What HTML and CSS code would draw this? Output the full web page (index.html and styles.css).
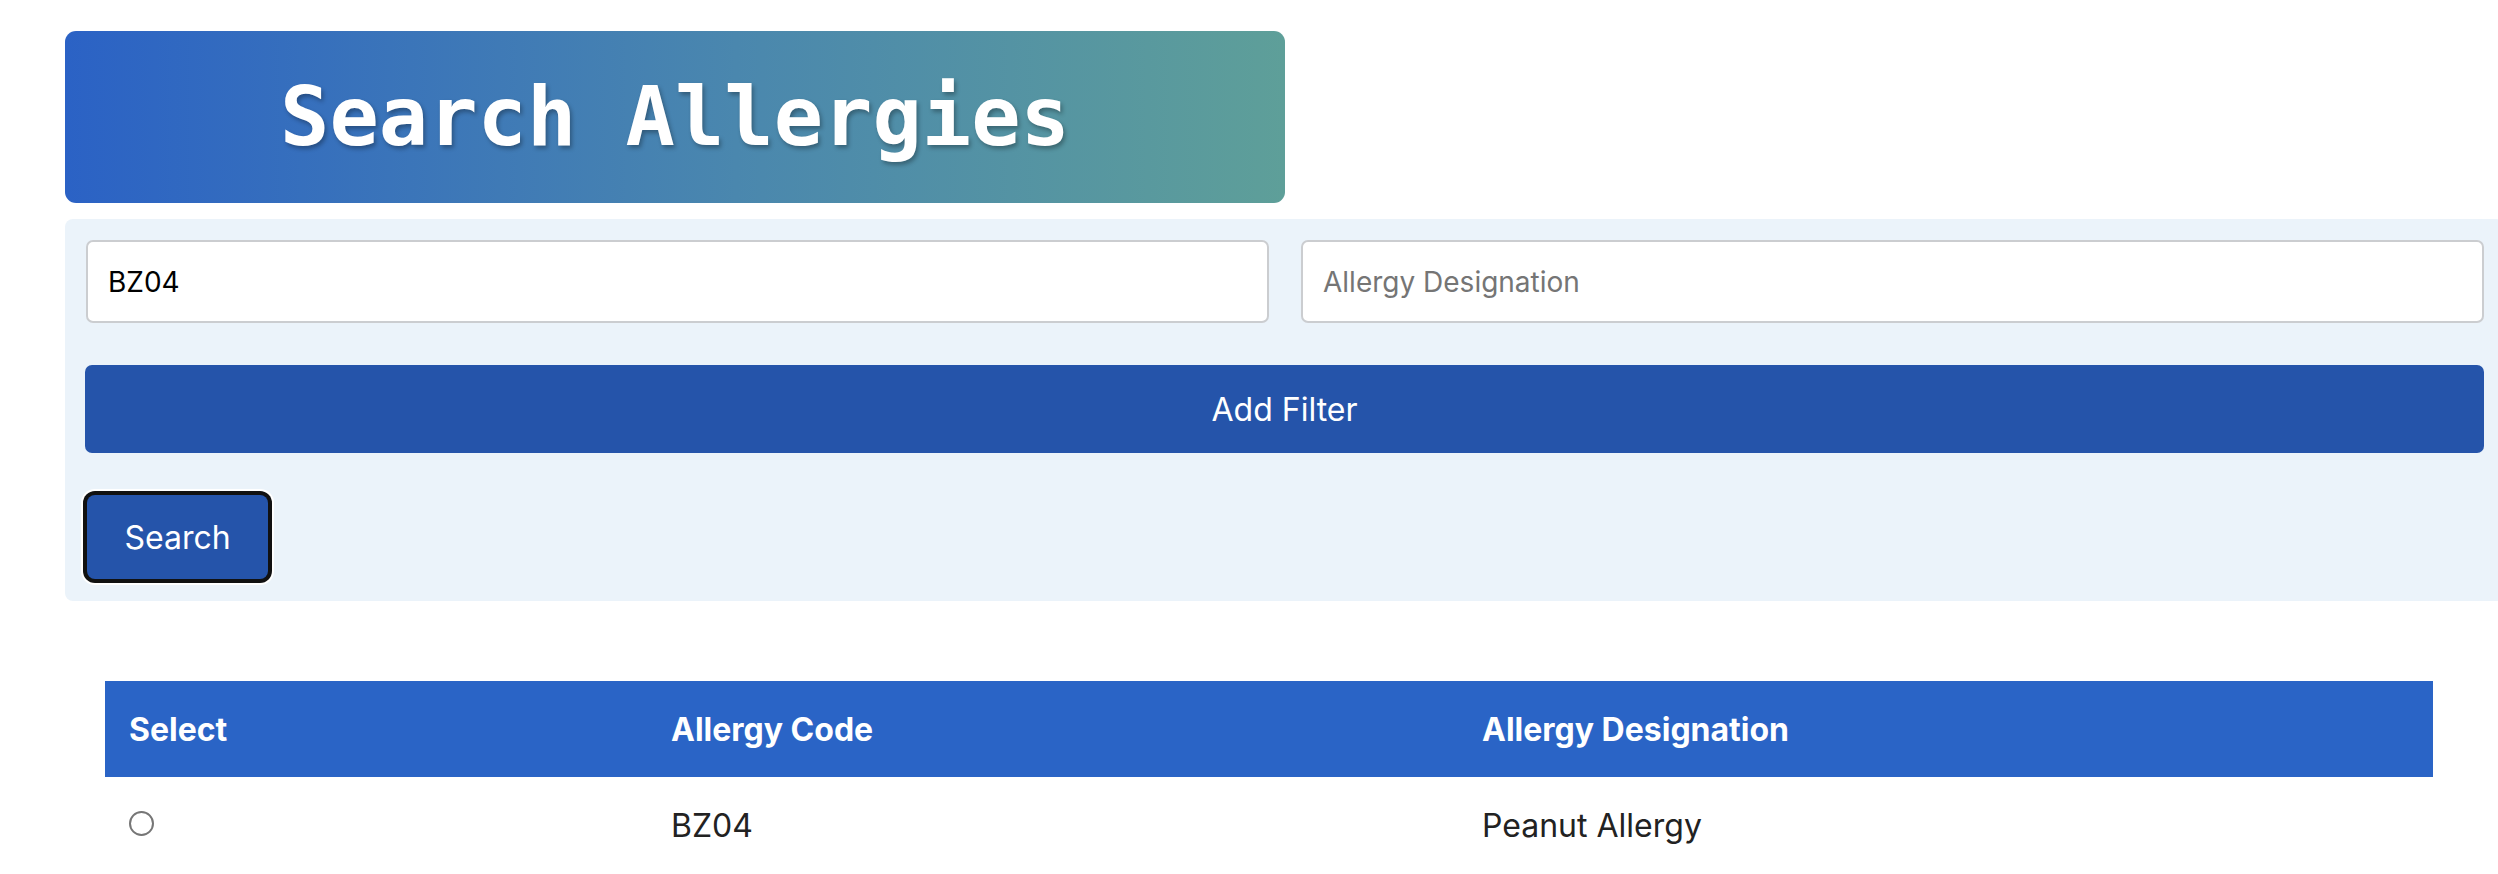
FILE: index.html
```html
<!DOCTYPE html>
<html lang="en">
<head>
<meta charset="utf-8">
<title>Search Allergies</title>
<link rel="stylesheet" href="styles.css">
</head>
<body>
<div class="page">
  <div class="banner"><h1 class="banner-title">Search Allergies</h1></div>
  <div class="panel">
    <div class="fields">
      <input class="field" type="text" value="BZ04">
      <input class="field" type="text" placeholder="Allergy Designation">
    </div>
    <button class="btn btn-wide" type="button">Add Filter</button>
    <div class="actions">
      <button class="btn btn-search focused" type="button">Search</button>
    </div>
  </div>
  <table class="results">
    <thead>
      <tr>
        <th class="c1">Select</th>
        <th class="c2">Allergy Code</th>
        <th class="c3">Allergy Designation</th>
      </tr>
    </thead>
    <tbody>
      <tr>
        <td><span class="radio"></span></td>
        <td>BZ04</td>
        <td>Peanut Allergy</td>
      </tr>
    </tbody>
  </table>
</div>
</body>
</html>
```
FILE: styles.css
```css
html, body {
  margin: 0;
  padding: 0;
  overflow: hidden;
  background: #ffffff;
  font-family: Inter, "Noto Sans", sans-serif;
}

.page {
  padding: 31px 0 0 65px;
  display: flex;
  flex-direction: column;
  align-items: flex-start;
}

.banner {
  width: 1220px;
  height: 172px;
  border-radius: 11px;
  background: linear-gradient(90deg, #2b62c5 0%, #4a87ae 55%, #5e9f99 100%);
  display: flex;
  align-items: center;
  justify-content: center;
}

.banner-title {
  margin: 0;
  font-family: "DejaVu Sans Mono", monospace;
  font-weight: bold;
  font-size: 82px;
  line-height: 1;
  color: #ffffff;
  text-shadow: 2px 3px 4px rgba(0, 0, 0, 0.3);
  letter-spacing: 0;
}

.panel {
  margin-top: 16px;
  width: 2439px;
  box-sizing: border-box;
  padding: 21px 20px 22px 20px;
  background: #ebf3fa;
  border-radius: 8px;
  display: flex;
  flex-direction: column;
}

.fields {
  display: grid;
  grid-template-columns: 1fr 1fr;
  gap: 32px;
  padding-left: 1px;
}

.field {
  height: 83px;
  box-sizing: border-box;
  border: 2px solid #cbcdd0;
  border-radius: 7px;
  background: #ffffff;
  padding: 0 20px;
  font-family: Inter, sans-serif;
  font-size: 28px;
  color: #000000;
  outline: none;
}

.field::placeholder {
  color: #757575;
}

.btn {
  font-family: Inter, sans-serif;
  color: #ffffff;
  background: #2554aa;
  border: none;
  cursor: pointer;
}

.btn-wide {
  margin-top: 42px;
  height: 88px;
  width: 100%;
  border-radius: 7px;
  font-size: 32px;
}

.actions {
  margin-top: 42px;
  padding-left: 2px;
  display: flex;
}

.btn-search {
  width: 181px;
  height: 84px;
  border-radius: 8px;
  font-size: 32px;
}

.focused {
  box-shadow: 0 0 0 4px #111111, 0 0 0 6px #ffffff;
}

.results {
  margin: 80px 0 0 40px;
  width: 2328px;
  border-collapse: collapse;
  table-layout: fixed;
}

.results th {
  height: 96px;
  background: #2a64c6;
  color: #ffffff;
  font-weight: bold;
  font-size: 32px;
  text-align: left;
  padding: 0 0 0 24px;
}

.results .c1 { width: 518px; }
.results .c2 { width: 787px; }
.results .c3 { width: 951px; }

.results td {
  height: 96px;
  font-size: 32px;
  color: #222222;
  padding: 0 0 0 24px;
  vertical-align: middle;
}

.radio {
  display: block;
  width: 25px;
  height: 25px;
  box-sizing: border-box;
  border: 2px solid #767676;
  border-radius: 50%;
  background: #ffffff;
  margin-top: -4px;
}
```
